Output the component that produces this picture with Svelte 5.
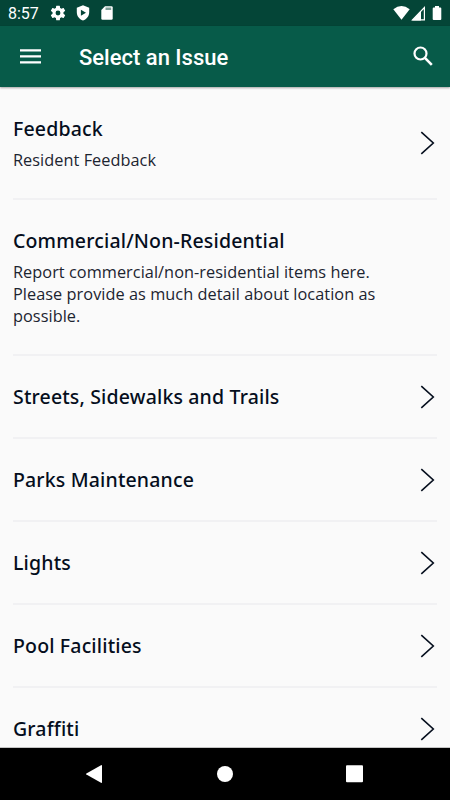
<script lang="ts">
	interface Issue {
		title: string;
		description?: string;
		hasChildren: boolean;
	}

	const issues: Issue[] = [
		{ title: 'Feedback', description: 'Resident Feedback', hasChildren: true },
		{
			title: 'Commercial/Non-Residential',
			description:
				'Report commercial/non-residential items here. Please provide as much detail about location as possible.',
			hasChildren: false
		},
		{ title: 'Streets, Sidewalks and Trails', hasChildren: true },
		{ title: 'Parks Maintenance', hasChildren: true },
		{ title: 'Lights', hasChildren: true },
		{ title: 'Pool Facilities', hasChildren: true },
		{ title: 'Graffiti', hasChildren: true }
	];
</script>

<div class="screen">
	<div class="status-bar">
		<span class="clock">8:57</span>
		<svg class="gear" width="16" height="16" viewBox="1.5 1.5 21 21">
			<path d="M19.14 12.94c.04-.3.06-.61.06-.94 0-.32-.02-.64-.07-.94l2.03-1.58a.49.49 0 0 0 .12-.61l-1.92-3.32a.49.49 0 0 0-.59-.22l-2.39.96a7 7 0 0 0-1.62-.94l-.36-2.54a.48.48 0 0 0-.48-.41h-3.84a.48.48 0 0 0-.47.41l-.36 2.54c-.59.24-1.13.57-1.62.94l-2.39-.96a.48.48 0 0 0-.59.22L2.74 8.87a.48.48 0 0 0 .12.61l2.03 1.58a6 6 0 0 0 0 1.88l-2.03 1.58a.49.49 0 0 0-.12.61l1.92 3.32c.12.22.37.29.59.22l2.39-.96c.5.38 1.03.7 1.62.94l.36 2.54c.05.24.24.41.48.41h3.84c.24 0 .44-.17.47-.41l.36-2.54a7 7 0 0 0 1.62-.94l2.39.96c.22.08.47 0 .59-.22l1.92-3.32a.48.48 0 0 0-.12-.61zM12 15.2a3.2 3.2 0 1 1 0-6.4 3.2 3.2 0 0 1 0 6.4z" />
		</svg>
		<svg class="shield" width="14" height="16" viewBox="0 0 14 16">
			<path fill-rule="evenodd" d="M7 .3 13.2 2.8v4.5c0 3.7-2.4 6.9-6.2 8.2C3.2 14.2.8 11 .8 7.3V2.8zM4.9 4.7v6.1L10 7.75z" />
		</svg>
		<svg class="card" width="12" height="14" viewBox="0 0 12 14">
			<path d="M4 .2h6.5q1.2 0 1.2 1.2v11.2q0 1.2-1.2 1.2h-9Q.3 13.8.3 12.6V4z" />
			<path class="contacts" d="M4.5 1.5h5.7V4H4.5z" />
		</svg>
		<svg class="wifi" width="17" height="14" viewBox="0 0 17 14">
			<path d="M.3 3.2Q8.5-3 16.7 3.2L8.5 13.7z" />
		</svg>
		<svg class="signal" width="15" height="15" viewBox="0 0 15 15">
			<path d="M13.4 1.5v12.3H1.5z" fill="none" stroke="#fff" stroke-width="1.2" />
			<path d="M1 14.4 10 5v9.4z" />
		</svg>
		<svg class="battery" width="10" height="14" viewBox="0 0 10 14">
			<path d="M3 0h4v1.4h1.3q1 0 1 1V13q0 1-1 1H1.7q-1 0-1-1V2.4q0-1 1-1H3z" />
		</svg>
	</div>

	<header class="app-bar">
		<button aria-label="Menu">
			<svg width="21" height="15" viewBox="0 0 21 15">
				<path d="M0 .2h21v2.2H0zM0 6.2h21v2.2H0zM0 12.2h21v2.2H0z" />
			</svg>
		</button>
		<h1>Select an Issue</h1>
		<button class="search" aria-label="Search">
			<svg width="20" height="20" viewBox="0 0 20 20">
				<circle cx="7.5" cy="7.5" r="6" fill="none" stroke="#fff" stroke-width="2.2" />
				<path d="m11.9 11.9 6.9 6.9" stroke="#fff" stroke-width="2.6" />
			</svg>
		</button>
	</header>

	<main class="issue-list">
		{#each issues as issue}
			<div class="issue-row">
				<div class="issue-text">
					<h2>{issue.title}</h2>
					{#if issue.description}
						<p>{issue.description}</p>
					{/if}
				</div>
				{#if issue.hasChildren}
					<svg class="chevron" width="15" height="24" viewBox="0 0 15 24">
						<path d="M1.3 1.2 13.3 12 1.3 22.8" />
					</svg>
				{/if}
			</div>
		{/each}
	</main>

	<nav class="nav-bar">
		<button aria-label="Back">
			<svg width="18" height="20" viewBox="0 0 18 20">
				<path d="M16 1.2q1-.5 1 .6v16.4q0 1.1-1 .6L1.4 10.6q-.8-.6 0-1.2z" />
			</svg>
		</button>
		<button aria-label="Home">
			<svg width="18" height="18" viewBox="0 0 18 18"><circle cx="9" cy="9" r="8" /></svg>
		</button>
		<button aria-label="Recent apps">
			<svg width="18" height="18" viewBox="0 0 18 18"><rect y=".2" width="17" height="17" rx="1" /></svg>
		</button>
	</nav>
</div>

<style>
	:global(body) {
		margin: 0;
		overflow: hidden;
	}

	.screen {
		display: flex;
		flex-direction: column;
		width: 450px;
		height: 800px;
		overflow: hidden;
		background: #fafafa;
		color: #050e1d;
		font-family: 'Open Sans', 'Noto Sans', sans-serif;
	}

	svg {
		display: block;
		flex: none;
		fill: #fff;
	}

	button {
		display: flex;
		align-items: center;
		justify-content: center;
		padding: 0;
		border: 0;
		background: none;
	}

	.status-bar {
		display: flex;
		align-items: center;
		flex: none;
		box-sizing: border-box;
		height: 26px;
		padding: 0 8px;
		background: #044537;
		color: #fff;
	}

	.clock {
		width: 42px;
		padding-top: 2px;
		font: 400 16px/24px Roboto, sans-serif;
	}

	.shield {
		margin-left: 10px;
	}

	.card {
		margin-left: 11px;
	}

	.contacts {
		fill: #7f9f97;
	}

	.wifi {
		margin-left: auto;
	}

	.signal {
		margin-left: 1px;
	}

	.battery {
		margin-left: 6px;
	}

	.app-bar {
		display: flex;
		align-items: center;
		flex: none;
		z-index: 1;
		height: 61px;
		padding: 0 17px 0 20px;
		background: #075b49;
		box-shadow: 0 1px 2px rgba(0, 0, 0, 0.35);
		color: #fff;
	}

	h1 {
		margin: 2px 0 0 38px;
		font: 500 22px/28px Roboto, sans-serif;
	}

	.search {
		margin: -1px 0 0 auto;
	}

	.issue-list {
		flex: 1;
		min-height: 0;
		overflow: hidden;
		padding: 1px 13px 0;
	}

	.issue-row {
		display: flex;
		align-items: center;
		justify-content: space-between;
		padding: 28px 2px 26px 0;
		border-bottom: 2px solid #f1f1f3;
	}

	.issue-text {
		max-width: 380px;
	}

	h2 {
		margin: 0;
		padding-bottom: 2px;
		font-family: 'Noto Sans', 'Open Sans', sans-serif;
		font-size: 19.5px;
		font-weight: 500;
		letter-spacing: 0.16px;
		line-height: 25px;
	}

	p {
		margin: 6px 0 1px;
		color: #1c2430;
		font-size: 16.3px;
		letter-spacing: 0.05px;
		line-height: 22px;
	}

	.chevron {
		margin-top: -2px;
	}

	.chevron path {
		fill: none;
		stroke: #050e1d;
		stroke-width: 1.6;
	}

	.nav-bar {
		display: flex;
		align-items: center;
		justify-content: space-between;
		flex: none;
		z-index: 1;
		box-sizing: border-box;
		height: 52px;
		padding: 0 86px 0 85px;
		background: #000;
		box-shadow: 0 -1px #c4c4c4;
	}
</style>
